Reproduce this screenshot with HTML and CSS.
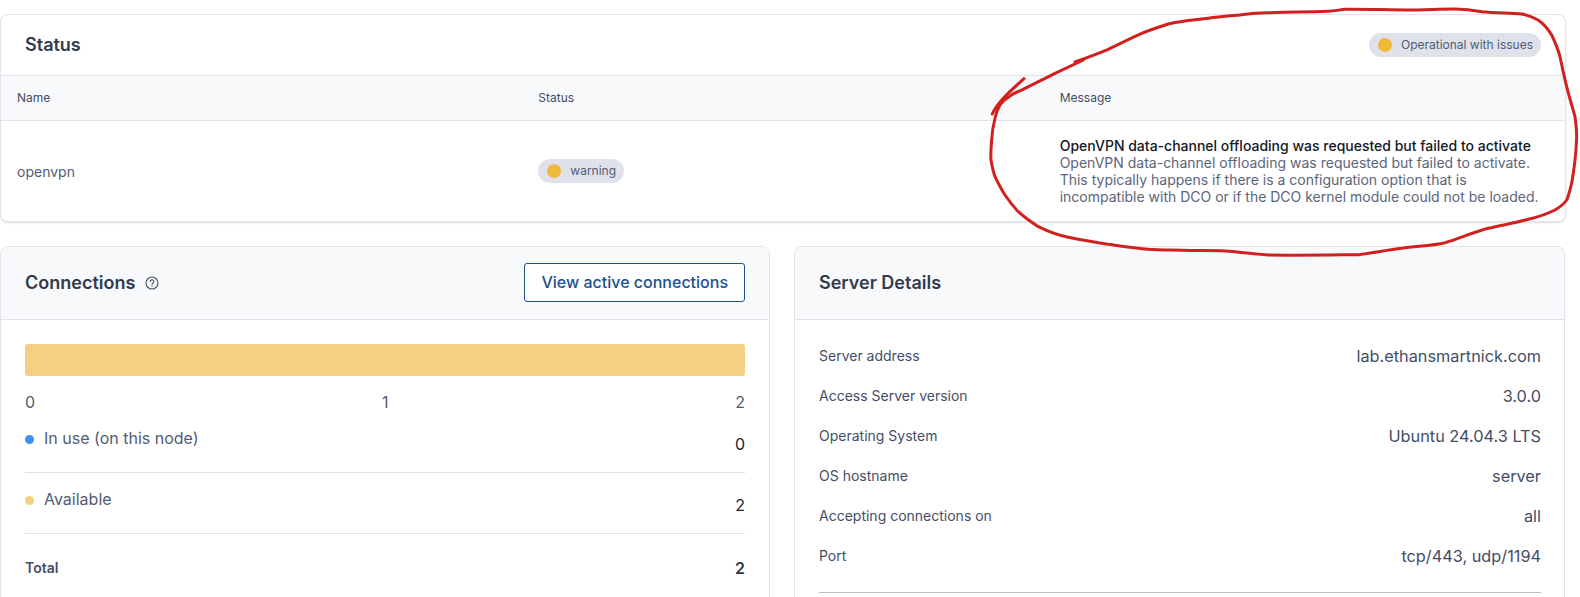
FILE: index.html
```html
<!DOCTYPE html>
<html lang="en">
<head>
  <meta charset="UTF-8">
  <title>Status</title>
  <meta name="viewport" content="width=device-width, initial-scale=1.0">
  <link rel="stylesheet" href="styles.css">
</head>
<body>

  <section class="card status-card">
    <div class="status-head">
      <h2>Status</h2>
      <span class="pill"><i class="dot"></i>Operational with issues</span>
    </div>
    <table class="status-table">
      <thead>
        <tr>
          <th>Name</th>
          <th>Status</th>
          <th>Message</th>
        </tr>
      </thead>
      <tbody>
        <tr>
          <td class="name-cell">openvpn</td>
          <td><span class="pill"><i class="dot"></i>warning</span></td>
          <td>
            <div class="msg-title">OpenVPN data-channel offloading was requested but failed to activate</div>
            <div class="msg-text">OpenVPN data-channel offloading was requested but failed to activate. This typically happens if there is a configuration option that is incompatible with DCO or if the DCO kernel module could not be loaded.</div>
          </td>
        </tr>
      </tbody>
    </table>
  </section>

  <div class="columns">
    <section class="card">
      <div class="card-head">
        <h2>Connections</h2>
        <svg class="help-icon" width="14" height="14" viewBox="0 0 14 14" fill="none" stroke="#4a5468" stroke-width="1.1" stroke-linecap="round">
          <circle cx="7" cy="7" r="6"/>
          <path d="M5.3 5.5a1.75 1.75 0 1 1 2.7 1.5c-.6.4-1 .7-1 1.4"/>
          <path d="M7 10.4v.1"/>
        </svg>
        <a class="btn" href="#">View active connections</a>
      </div>
      <div class="card-body">
        <div class="bar"></div>
        <div class="axis"><span>0</span><span>1</span><span>2</span></div>
        <div class="legend-row">
          <span class="legend-label"><i class="mini-dot blue"></i>In use (on this node)</span>
          <span class="legend-value">0</span>
        </div>
        <div class="legend-row">
          <span class="legend-label"><i class="mini-dot yellow"></i>Available</span>
          <span class="legend-value">2</span>
        </div>
        <div class="total-row">
          <span>Total</span>
          <span class="total-value">2</span>
        </div>
      </div>
    </section>

    <section class="card">
      <div class="card-head">
        <h2>Server Details</h2>
      </div>
      <div class="details">
        <div class="detail-row"><span>Server address</span><b>lab.ethansmartnick.com</b></div>
        <div class="detail-row"><span>Access Server version</span><b>3.0.0</b></div>
        <div class="detail-row"><span>Operating System</span><b>Ubuntu 24.04.3 LTS</b></div>
        <div class="detail-row"><span>OS hostname</span><b>server</b></div>
        <div class="detail-row"><span>Accepting connections on</span><b>all</b></div>
        <div class="detail-row"><span>Port</span><b>tcp/443, udp/1194</b></div>
        <div class="details-rule"></div>
      </div>
    </section>
  </div>

  <!-- hand drawn circle on top of the screenshot -->
  <svg class="scribble" width="1580" height="597" viewBox="0 0 1580 597" fill="none" stroke="#d2201f" stroke-width="3" stroke-linecap="round" stroke-linejoin="round">
    <path d="M992.3 114C995 108 999 103 1003.300 98.300C1009 92 1017 85 1024 78.700"/>
    <path d="M1083.300 60L1055 73.300L1025 88.300C1018 92 1013 93 1008.300 97.300C1004 100 1002 102 1000 105C997 110 996 113 995 118.300C993 126 992 132 991.700 140C991 147 990.500 153 991 160C992 166 993 171 995 176.700C998 183 1001 189 1005 195C1009 201 1013 206 1018.300 211.700C1024 217 1031 222 1038.300 226.700C1047 231 1057 235 1068.300 237.300C1081 240 1095 242 1108.300 244.300C1121 246 1135 248 1148.300 249.300C1159 250 1170 250 1181.700 250.300C1199 251 1217 250 1235 251.700C1246 253 1257 254 1268.300 255C1298 255.500 1328 255 1358.300 254.700C1373 253 1387 250 1401.700 248.300C1416 246 1431 246 1445 242.700C1460 238 1474 232 1488.300 228.300C1502 225 1515 223 1528.300 219.300C1538 217 1547 214 1555 210C1560 207 1564 204 1566.700 200C1569 195 1570 189 1571.700 183.300C1574 170 1576 155 1576.500 140C1577 132 1576 124 1575 116.700C1572 106 1569 96 1566.700 86.700C1564 76 1562 66 1560 56.700C1558 49 1555 42 1551.700 35C1548 29 1544 24 1538 20C1533 17 1528 15 1521.700 14C1508 13 1495 13 1481.700 11.700C1473 10 1464 9 1455 9C1440 9 1424 10 1408 10C1387 10 1366 9 1345 9.300C1339 10 1334 11 1328.300 11.300C1310 12 1293 12 1275 12.500C1265 13 1258 13 1248.300 14C1235 15.500 1222 16.500 1208.300 18.300C1195 20 1181 21 1168.300 24C1159 27 1150 30 1141.700 33.300C1130 38.500 1119 44 1108.300 49.300C1097 54 1086 58 1075 62"/>
  </svg>

</body>
</html>
```

FILE: styles.css
```css
html, body {
  height: 597px;
  overflow: hidden;
}
body {
  margin: 0;
  padding: 14px 14px 0 0;
  box-sizing: border-box;
  background: #fff;
  color: #434e66;
  font-family: 'Inter', sans-serif;
  font-size: 14px;
  line-height: 20px;
}
h2 {
  margin: 0;
  color: #323b4e;
  font-size: 18px;
  font-weight: 600;
  line-height: 24px;
}
.card {
  background: #fff;
  border: 1px solid #e0e3ea;
  border-radius: 8px;
  overflow: hidden;
}
.status-card {
  box-shadow: 0 1px 2px rgba(60, 70, 90, 0.18);
}
.status-head {
  display: flex;
  align-items: center;
  justify-content: space-between;
  height: 60px;
  padding: 0 24px;
  border-bottom: 1px solid #e0e3ea;
}
.pill {
  display: inline-flex;
  align-items: center;
  height: 24px;
  padding: 0 8px 0 9px;
  border-radius: 12px;
  background: #dfe2eb;
  color: #515c74;
  font-size: 12px;
  line-height: 24px;
}
.dot {
  width: 14px;
  height: 14px;
  margin-right: 9px;
  border-radius: 50%;
  background: #f0b93b;
}
.status-table {
  width: 100%;
  border-collapse: collapse;
  table-layout: fixed;
}
.status-table th {
  height: 44px;
  padding: 0 0 0 16px;
  background: #f8f9fb;
  border-bottom: 1px solid #e0e3ea;
  color: #434e66;
  font-size: 12px;
  font-weight: 400;
  text-align: left;
}
.status-table td {
  box-sizing: border-box;
  height: 100px;
  padding: 0 0 0 16px;
  vertical-align: middle;
}
.status-table .name-cell {
  padding-top: 2px;
  color: #515c74;
}
.msg-title {
  color: #14181f;
  font-size: 14px;
  font-weight: 500;
  line-height: 17px;
  white-space: nowrap;
}
.msg-text {
  width: 488px;
  color: #5b6579;
  font-size: 14px;
  line-height: 17px;
}
.columns {
  display: grid;
  grid-template-columns: 770px 771px;
  gap: 24px;
  margin-top: 24px;
}
.card-head {
  display: flex;
  align-items: center;
  height: 72px;
  padding: 0 24px;
  background: #f8f9fb;
  border-bottom: 1px solid #e0e3ea;
}
.help-icon {
  margin-left: 10px;
}
.btn {
  margin-left: auto;
  padding: 0 16px;
  height: 37px;
  border: 1px solid #1d4f91;
  border-radius: 3px;
  background: #fff;
  color: #1d4f91;
  font-size: 16px;
  font-weight: 500;
  line-height: 37px;
  text-decoration: none;
}
.card-body {
  padding: 24px 24px 60px;
  font-size: 16px;
}
.bar {
  height: 32px;
  border-radius: 3px;
  background: #f4d182;
}
.axis {
  display: flex;
  justify-content: space-between;
  margin-top: 16px;
  color: #515c74;
}
.legend-row {
  display: flex;
  justify-content: space-between;
  height: 44px;
  padding-top: 16px;
  border-bottom: 1px solid #dfe2e8;
}
.legend-label {
  color: #515c74;
}
.mini-dot {
  display: inline-block;
  width: 9px;
  height: 9px;
  margin-right: 10px;
  border-radius: 50%;
}
.blue {
  background: #3d8ff0;
}
.yellow {
  background: #f4d182;
}
.legend-value {
  margin-top: 6px;
  color: #1c2230;
}
.total-row {
  display: flex;
  justify-content: space-between;
  padding-top: 24px;
  color: #434e66;
  font-size: 14px;
  font-weight: 600;
}
.total-value {
  color: #323b4e;
  font-size: 16px;
}
.details {
  padding: 16px 23px 16px 24px;
}
.detail-row {
  display: flex;
  align-items: center;
  justify-content: space-between;
  height: 40px;
  font-size: 14px;
}
.detail-row b {
  font-size: 16.3px;
  font-weight: 400;
  color: #434e66;
}
.details-rule {
  margin-top: 16px;
  height: 1px;
  background: #b9bfca;
}
.scribble {
  position: absolute;
  top: 0;
  left: 0;
  pointer-events: none;
}
```
